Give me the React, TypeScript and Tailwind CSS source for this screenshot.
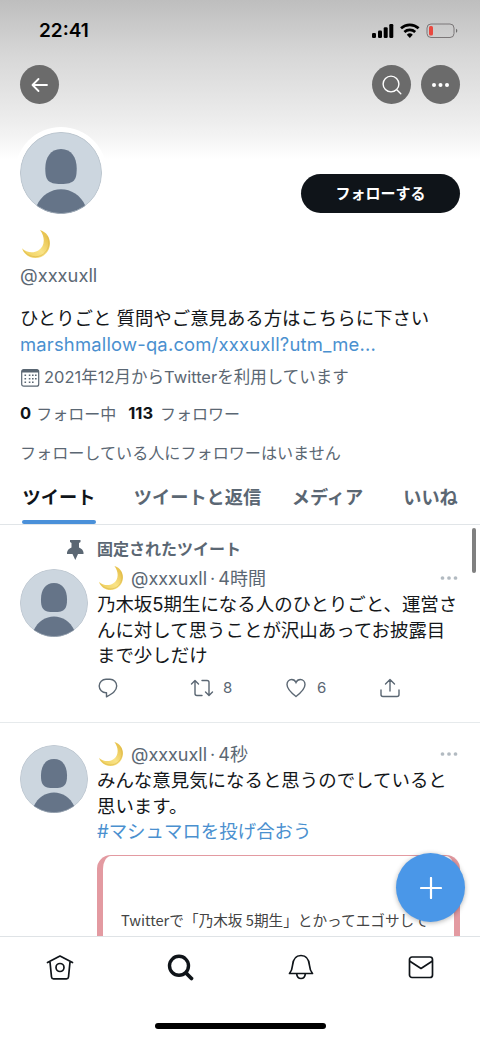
import type { ReactNode } from "react"

const TABS = [
  { label: "ツイート", active: true, className: "ml-[22px] w-[74px]" },
  { label: "ツイートと返信", active: false, className: "ml-[37px] w-[129px]" },
  { label: "メディア", active: false, className: "ml-[28px] w-[75px]" },
  { label: "いいね", active: false, className: "ml-[37px] w-[57px]" },
]

/** Default profile picture: head and shoulders on a pale disc. */
function Avatar({ className }: { className: string }) {
  return (
    <svg viewBox="0 0 82 82" className={`shrink-0 rounded-full ${className}`}>
      <circle cx="41" cy="41" r="41" fill="#ccd6df" />
      <path
        d="M41 17c10.500 0 15.700 8.500 15.700 19.500 0 11-2 15.500-15.700 15.500S25.300 47.500 25.300 36.500C25.300 25.500 30.500 17 41 17z"
        fill="#657488"
      />
      <path d="M16.500 74C21.500 63 31 57.300 41 57.300S60.500 63 65.500 74A41 41 0 0 1 16.500 74z" fill="#657488" />
      <circle cx="41" cy="41" r="40.600" fill="none" stroke="#b6c0c9" strokeWidth="0.800" />
    </svg>
  )
}

function Moon({ className }: { className: string }) {
  return (
    <svg viewBox="0 0 28 28" className={`shrink-0 ${className}`}>
      <defs>
        <linearGradient id="moon" x1="0.2" y1="0.9" x2="0.9" y2="0.3">
          <stop offset="0" stopColor="#f0d263" />
          <stop offset="0.500" stopColor="#f9e387" />
          <stop offset="1" stopColor="#e9c552" />
        </linearGradient>
      </defs>
      <path
        d="M18 0C25 2.200 28.200 8 27.900 14 27.500 22 21.500 28 13.500 28 7.500 28 2 24.500 0 18.300 4 22.300 11 23.700 16.300 20.500 23 16.500 23.500 7.500 18 0z"
        fill="url(#moon)"
      />
      <path d="M1.500 20.500C6 27 15 28.500 21 24.500 27 20 28.500 12 25 6" fill="none" stroke="#dcb74a" strokeWidth="0.700" />
    </svg>
  )
}

function RoundButton({ label, children }: { label: string; children: ReactNode }) {
  return (
    <button aria-label={label} className="flex h-[39px] w-[39px] items-center justify-center rounded-full bg-[#6b6b6b]">
      {children}
    </button>
  )
}

function StatusBar() {
  return (
    <div className="flex h-[58px] items-center justify-between pt-[3px] pr-[22px] pl-[39px] text-black">
      <span className="pt-[2px] text-[19px] font-semibold">22:41</span>
      <svg width="87" height="16" viewBox="0 0 87 16">
        <rect x="1" y="10" width="4" height="5" rx="1.200" />
        <rect x="7" y="7.500" width="4" height="7.500" rx="1.200" />
        <rect x="12.700" y="4.300" width="4" height="10.700" rx="1.200" />
        <rect x="18.300" y="1" width="4" height="14" rx="1.200" />
        <g fill="none" stroke="#000" strokeWidth="2.700">
          <path d="M30 5.300a13 13 0 0 1 17.600 0" />
          <path d="M33.400 9a8 8 0 0 1 10.800 0" />
        </g>
        <path d="M35.800 11.700a4.500 4.500 0 0 1 6 0l-3 3.200z" />
        <rect x="56" y="1" width="27" height="13.500" rx="4" fill="none" stroke="#7b7778" />
        <rect x="58" y="3" width="4" height="9.500" rx="1.500" fill="#e9483f" />
        <path d="M85 5.800c1.800.700 1.800 3.300 0 4z" fill="#6d6d6d" />
      </svg>
    </div>
  )
}

function Dots() {
  return (
    <svg width="18" height="4" viewBox="0 0 18 4" fill="#b2bac1">
      <circle cx="2.500" cy="2" r="1.850" />
      <circle cx="9" cy="2" r="1.850" />
      <circle cx="15.500" cy="2" r="1.850" />
    </svg>
  )
}

function Tweet({ time, children }: { time: string; children: ReactNode }) {
  return (
    <div className="flex pr-5 pl-5">
      <Avatar className="mt-1 h-[68px] w-[68px]" />
      <div className="ml-[9px] w-[363px]">
        <div className="flex h-[27px] items-center text-[18px] text-[#5b6773]">
          <Moon className="-mt-px ml-[2px] h-6 w-6" />
          <span className="ml-[8px] whitespace-nowrap">
            @xxxuxll<span className="mx-[3px]">·</span>
            {time}
          </span>
          <span className="-mt-[2px] mr-[2px] ml-auto">
            <Dots />
          </span>
        </div>
        {children}
      </div>
    </div>
  )
}

function TweetActions() {
  return (
    <div className="mt-[7px] flex h-6 items-center text-[15px] text-[#5b6773]">
      <svg width="20" height="20" viewBox="0 0 20 20" className="ml-[1px]" fill="none" stroke="currentColor" strokeWidth="1.400" strokeLinejoin="round">
        <path d="M8 1.200h4A6.700 6.700 0 0 1 18.700 8c0 5-4.500 7.500-10.200 10.800v-4H8A6.800 6.800 0 0 1 8 1.200z" />
      </svg>
      <svg width="24" height="20" viewBox="0 0 24 20" className="ml-[72px]" fill="none" stroke="currentColor" strokeWidth="1.400" strokeLinecap="round" strokeLinejoin="round">
        <path d="M1.500 6 5 2.500 8.500 6M5 3v12.500q0 2 2 2h5" />
        <path d="M22.500 14 19 17.500 15.500 14M19 17V4.500q0-2-2-2h-5" />
      </svg>
      <span className="ml-[9px] w-[10px]">8</span>
      <svg width="20" height="20" viewBox="0 0 20 20" className="ml-[53px]" fill="none" stroke="currentColor" strokeWidth="1.400">
        <path d="M10 18.500C6 15.500 1 11.500 1 6.600 1 3.500 3.100 1.500 5.600 1.500 7.600 1.500 9.200 2.600 10 4.500c.800-1.900 2.400-3 4.400-3C16.900 1.500 19 3.500 19 6.600c0 4.900-5 8.900-9 11.900z" />
      </svg>
      <span className="ml-[11px] w-[10px]">6</span>
      <svg width="20" height="20" viewBox="0 0 20 20" className="ml-[53px]" fill="none" stroke="currentColor" strokeWidth="1.400" strokeLinecap="round" strokeLinejoin="round">
        <path d="M1 12v4.500q0 2 2 2h14q2 0 2-2V12M10 13V1.500M5.500 6 10 1.500 14.500 6" />
      </svg>
    </div>
  )
}

function Profile() {
  return (
    <section className="px-5">
      <div className="flex items-start justify-between pt-7">
        <Avatar className="h-[82px] w-[82px] ring-[5px] ring-white" />
        <button className="mt-[42px] h-[39px] w-[159px] rounded-full bg-[#0f1419] pt-[2px] text-[15px] font-bold text-white">
          フォローする
        </button>
      </div>
      <Moon className="mt-4 ml-[2px] h-7 w-7" />
      <div className="mt-1 flex h-7 items-center text-[18.300px] text-[#5b6773]">@xxxuxll</div>
      <div className="mt-[15px] text-[18.400px] leading-[27px] whitespace-nowrap text-[#14171a]">
        <p>ひとりごと 質問やご意見ある方はこちらに下さい</p>
        <p className="-mt-px tracking-[0.200px] text-[#4a90cf]">marshmallow-qa.com/xxxuxll?utm_me...</p>
      </div>
      <div className="mt-[7px] flex h-[25px] items-center text-[16.500px] whitespace-nowrap text-[#5b6773]">
        <svg width="19" height="18" viewBox="0 0 19 18" className="mr-1 ml-[1px]" fill="currentColor">
          <rect x="0.700" y="0.700" width="17" height="16.500" rx="2" fill="none" stroke="currentColor" strokeWidth="1.200" />
          <path d="M.700 3.500V2.500Q.700.500 2.700.500h13q2 0 2 2v1z" />
          <path d="M7.800 5.500h1.600v1.600H7.800zM11 5.500h1.600v1.600H11zM14 5.500h1.600v1.600H14zM3.500 9h1.600v1.600H3.500zM7.800 9h1.600v1.600H7.800zM11 9h1.600v1.600H11zM14 9h1.600v1.600H14zM3.500 12.500h1.600v1.600H3.500zM7.800 12.500h1.600v1.600H7.800zM11 12.500h1.600v1.600H11zM3.500 5.500h1.600v1.600H3.500z" />
        </svg>
        <span>2021年12月からTwitterを利用しています</span>
      </div>
      <div className="mt-[11px] flex h-[25px] items-center text-[16px] whitespace-nowrap text-[#5b6773]">
        <b className="mr-[5px] text-[16.500px] text-[#0f1419]">0</b>フォロー中
        <b className="mr-[7px] ml-3 text-[16.500px] text-[#0f1419]">113</b>フォロワー
      </div>
      <div className="mt-[14px] flex h-[25px] items-center pt-[2px] text-[16.100px] whitespace-nowrap text-[#5b6773]">
        フォローしている人にフォロワーはいません
      </div>
    </section>
  )
}

export default function App() {
  return (
    <div
      lang="ja"
      className="relative flex h-[1039px] w-[480px] flex-col overflow-hidden bg-white bg-[linear-gradient(#bebebe_0px,#d7d7d7_55px,#ececec_118px,#f3f3f3_135px,#ffffff_160px)] font-['Inter','Noto_Sans_CJK_JP',sans-serif]"
    >
      <StatusBar />
      <div className="flex justify-between px-5 pt-[7px]">
        <RoundButton label="戻る">
          <svg width="18" height="16" viewBox="0 0 18 16" fill="none" stroke="#fff" strokeWidth="1.800" strokeLinecap="round" strokeLinejoin="round">
            <path d="M16 8H2M7.500 2 1.500 8l6 6" />
          </svg>
        </RoundButton>
        <div className="flex gap-[10px]">
          <RoundButton label="検索">
            <svg width="20" height="20" viewBox="0 0 20 20" fill="none" stroke="#fff" strokeWidth="1.400" strokeLinecap="round">
              <circle cx="9" cy="9" r="7.900" />
              <path d="m15 15 3.800 3.800" />
            </svg>
          </RoundButton>
          <RoundButton label="その他">
            <svg width="19" height="4" viewBox="0 0 19 4" fill="#fff">
              <circle cx="3" cy="2" r="2" />
              <circle cx="9.500" cy="2" r="2" />
              <circle cx="16" cy="2" r="2" />
            </svg>
          </RoundButton>
        </div>
      </div>

      <Profile />

      <div className="flex h-[60px] shrink-0 border-b border-[#e1e5e8] text-[18.200px] font-bold whitespace-nowrap">
        {TABS.map((tab) => (
          <div key={tab.label} className={`flex flex-col items-center pt-[19px] ${tab.className}`}>
            <span className={`leading-[26px] ${tab.active ? "text-[#0f1419]" : "text-[#5b6773]"}`}>{tab.label}</span>
            {tab.active && <span className="mt-[10px] h-1 w-full rounded-full bg-[#4a90d9]" />}
          </div>
        ))}
      </div>

      <main className="h-[411px] shrink-0 overflow-hidden text-[18.450px] leading-[25.700px] text-[#14171a]">
        <article className="h-[198px] border-b border-[#e6eaec] pt-3">
          <div className="mb-[2px] flex h-[26px] items-center pl-[67px] text-[16px] font-bold text-[#5b6773]">
            <svg width="17" height="20" viewBox="0 0 17 20" fill="currentColor" className="mr-[13px]">
              <path d="M3 0h10.500v2L12 3v4.500q4 1.500 4.500 5V14H11l-2.700 6L5.500 14H0v-1.500q.500-3.500 4.500-5V3L3 2z" />
            </svg>
            <span>固定されたツイート</span>
          </div>
          <Tweet time="4時間">
            <p className="whitespace-nowrap">
              乃木坂5期生になる人のひとりごと、運営さ
              <br />
              んに対して思うことが沢山あってお披露目
              <br />
              まで少しだけ
            </p>
            <TweetActions />
          </Tweet>
        </article>
        <article className="pt-[18px]">
          <Tweet time="4秒">
            <p className="whitespace-nowrap">
              みんな意見気になると思うのでしていると
              <br />
              思います。
              <br />
              <a className="text-[#4a90cf]">#マシュマロを投げ合おう</a>
            </p>
            <div className="mt-[10px] h-[200px] rounded-[14px] border-x-[6px] border-t border-[#e39aa1] pt-[51px] pl-[18px] font-['Noto_Sans_CJK_JP',sans-serif] text-[14.650px] whitespace-nowrap text-[#444]">
              Twitterで「乃木坂 5期生」とかってエゴサして
            </div>
          </Tweet>
        </article>
      </main>

      <nav className="flex h-[103px] shrink-0 items-start justify-between border-t border-[#dfe3e6] bg-white pt-[15px] pr-[44px] pl-[45px] text-[#0f1419]">
        <svg width="30" height="30" viewBox="0 0 30 30" fill="none" stroke="currentColor" strokeWidth="1.700" strokeLinecap="round" strokeLinejoin="round">
          <path d="M2.500 10.500 15 4l12.500 6.500M5 10l1.500 15q.200 1.800 2 1.800h13q1.800 0 2-1.800L25 10" />
          <circle cx="15" cy="15.500" r="4" />
        </svg>
        <svg width="30" height="30" viewBox="0 0 30 30" fill="none" stroke="currentColor" strokeLinecap="round">
          <circle cx="14" cy="13.800" r="9.500" strokeWidth="3.400" />
          <path d="m21.500 21.500 5 5" strokeWidth="3.800" />
        </svg>
        <svg width="30" height="30" viewBox="0 0 30 30" fill="none" stroke="currentColor" strokeWidth="1.700" strokeLinejoin="round">
          <path d="M3.500 21.500c2-2.500 2.700-4 3-8C7 7.500 10 3.500 15 3.500s8 4 8.500 10c.300 4 1 5.500 3 8z" />
          <path d="M10.700 21.800c.300 3 2 4.700 4.300 4.700s4-1.700 4.300-4.700" />
        </svg>
        <svg width="30" height="30" viewBox="0 0 30 30" fill="none" stroke="currentColor" strokeWidth="1.700" strokeLinejoin="round">
          <rect x="3.500" y="5" width="23" height="20.500" rx="2.500" />
          <path d="M3.500 9 15 16.500 26.500 9" />
        </svg>
      </nav>

      {/* Overlays: scroll indicator, compose button, home indicator */}
      <div className="absolute top-[528px] right-1 h-[45px] w-1 rounded-full bg-[#808080]" />
      <button
        aria-label="ツイートする"
        className="absolute top-[853px] right-[15px] flex h-[69px] w-[69px] items-center justify-center rounded-full bg-[#4a97e8] shadow-[0_1px_5px_rgba(0,0,0,0.3)]"
      >
        <svg width="22" height="22" viewBox="0 0 22 22" stroke="#fff" strokeWidth="2.200" strokeLinecap="round">
          <path d="M11 1v20M1 11h20" />
        </svg>
      </button>
      <div className="absolute bottom-[10px] left-[155px] h-[6px] w-[171px] rounded-full bg-black" />
    </div>
  )
}
